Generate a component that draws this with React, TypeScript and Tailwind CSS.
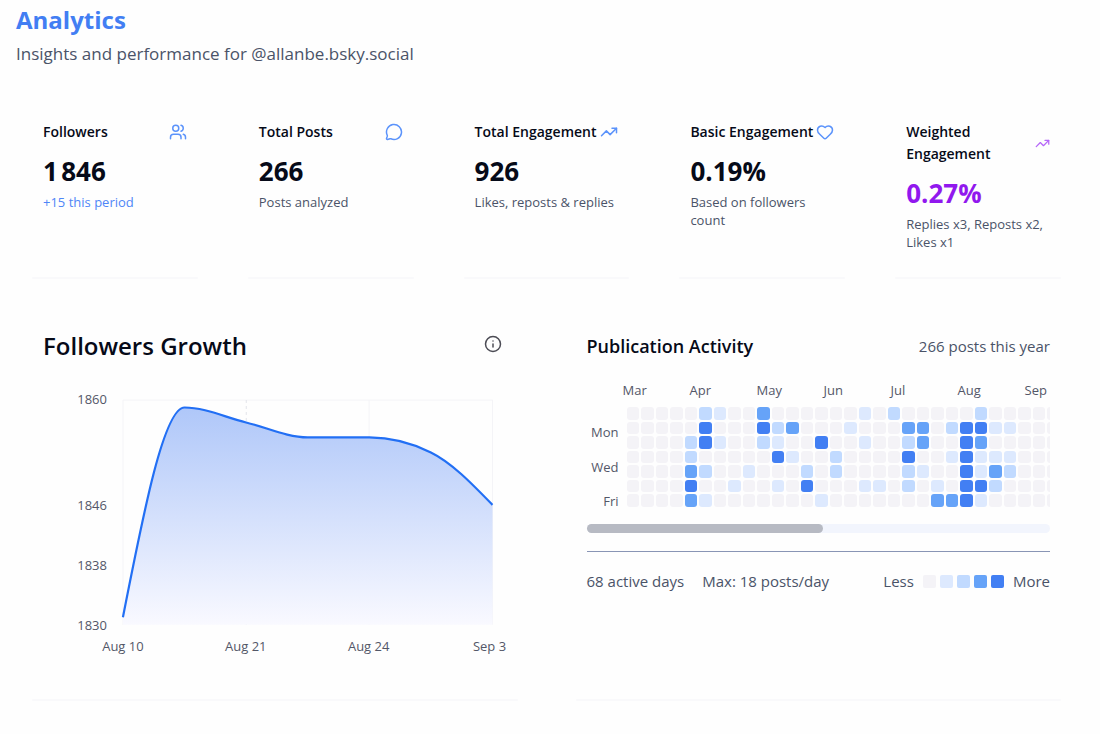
import { Heart, Info, MessageCircle, TrendingUp, Users } from "lucide-react";
import type { ReactNode } from "react";

type Stat = {
  label: string;
  value: string;
  note: string;
  icon: ReactNode;
  valueClass?: string;
  noteClass?: string;
};

const stats: Stat[] = [
  {
    label: "Followers",
    value: "1\u202f846",
    note: "+15 this period",
    icon: <Users className="size-[18px] shrink-0 text-[#5b93fb]" />,
    noteClass: "text-[#4f86f7]",
  },
  {
    label: "Total Posts",
    value: "266",
    note: "Posts analyzed",
    icon: <MessageCircle className="size-[18px] shrink-0 text-[#5b93fb]" />,
  },
  {
    label: "Total Engagement",
    value: "926",
    note: "Likes, reposts & replies",
    icon: <TrendingUp className="size-[18px] shrink-0 text-[#5b93fb]" />,
  },
  {
    label: "Basic Engagement",
    value: "0.19%",
    note: "Based on followers count",
    icon: <Heart className="size-[18px] shrink-0 text-[#5b93fb]" />,
  },
  {
    label: "Weighted Engagement",
    value: "0.27%",
    note: "Replies x3, Reposts x2, Likes x1",
    icon: <TrendingUp className="size-[15px] shrink-0 text-[#b566f8]" />,
    valueClass: "text-[#9118ee]",
  },
];

const months = ["Mar", "Apr", "May", "Jun", "Jul", "Aug", "Sep"];

// One string per weekday, one digit (0-4) per week.
const activity = [
  "000002100300000010200000200000",
  "000004000423000100033024411000",
  "000024100210040010023004300000",
  "000020000041002000040014111000",
  "000032001000202000021004132000",
  "000040010010400011020104420000",
  "000031000000010000000334100000",
];

const levels = [
  "bg-[#f4f3f7]",
  "bg-[#dde9fe]",
  "bg-[#c1daff]",
  "bg-[#66a3f8]",
  "bg-[#427ff3]",
];

const curve =
  "M80,232.5C100.6,127.5 121.1,22.5 141.7,22.5C162.2,22.5 182.8,32.5 203.3,37.5C223.9,42.5 244.4,52.5 265,52.5L326.7,52.5C347.2,52.5 367.8,57.5 388.3,67.5C408.9,77.5 429.4,98.8 450,120";

function Card({ children }: { children: ReactNode }) {
  return (
    <section className="flex min-w-0 flex-col justify-between">
      <div className="px-[27px] pt-[27px] pb-[26px]">{children}</div>
      <div className="mx-4 h-0.5 rounded-full bg-[#f9f9fb]" />
    </section>
  );
}

function StatCard({ stat }: { stat: Stat }) {
  return (
    <Card>
      <div className="flex items-center justify-between">
        <h2 className="text-[14px] leading-[22px] font-semibold">{stat.label}</h2>
        {stat.icon}
      </div>
      <p className={`mt-[11px] text-[26px] leading-[34px] font-bold ${stat.valueClass ?? ""}`}>
        {stat.value}
      </p>
      <p className={`mt-[5px] text-[13px] leading-[18px] ${stat.noteClass ?? "text-[#4a5368]"}`}>
        {stat.note}
      </p>
    </Card>
  );
}

function GrowthChart() {
  return (
    <svg
      viewBox="0 0 464 288"
      className="mt-[23px] w-full overflow-visible"
      role="img"
      aria-label="Followers growth"
    >
      <defs>
        <linearGradient id="growth" x1="0" y1="0" x2="0" y2="1">
          <stop offset="0" stopColor="#afc7f9" />
          <stop offset="1" stopColor="#f9f9ff" />
        </linearGradient>
      </defs>
      <path d="M80,240V15H450V240M326.5,15V240" fill="none" stroke="#f4f4f7" />
      <path d="M203.5,15V240" stroke="#e3e4ea" strokeDasharray="3 3" />
      <path d={`${curve}V240H80Z`} fill="url(#growth)" />
      <path d={curve} fill="none" stroke="#226ff4" strokeWidth="2.2" />
      <g className="fill-[#535768] text-[13px]" textAnchor="end">
        <text x="64" y="19">1860</text>
        <text x="64" y="125">1846</text>
        <text x="64" y="185">1838</text>
        <text x="64" y="245">1830</text>
      </g>
      <g className="fill-[#535768] text-[13px]" textAnchor="middle">
        <text x="80" y="266">Aug 10</text>
        <text x="203" y="266">Aug 21</text>
        <text x="326" y="266">Aug 24</text>
        <text x="447" y="266">Sep 3</text>
      </g>
    </svg>
  );
}

function ActivityGrid() {
  return (
    <div className="mt-[18px] overflow-hidden text-[13px] leading-5 text-[#535768]">
      <div className="ml-9 flex">
        {months.map((month) => (
          <span key={month} className="w-[67px] shrink-0">
            {month}
          </span>
        ))}
      </div>
      <div className="mt-[7px] flex gap-2">
        <div className="flex w-8 shrink-0 flex-col justify-between pt-[15px] text-right">
          <span>Mon</span>
          <span>Wed</span>
          <span>Fri</span>
        </div>
        <div className="min-w-0 flex-1 overflow-hidden pb-1">
          <div className="grid h-[100px] w-[433px] grid-rows-7 gap-0.5">
            {activity.map((row, day) => (
              <div key={day} className="grid grid-cols-[repeat(30,minmax(0,1fr))] gap-0.5">
                {row.split("").map((level, week) => (
                  <span key={week} className={`rounded-[3px] ${levels[Number(level)]}`} />
                ))}
              </div>
            ))}
          </div>
        </div>
      </div>
    </div>
  );
}

export default function App() {
  return (
    <main className="min-h-screen bg-[#fefefe] pr-[23px] pl-4 font-['Open_Sans','Noto_Sans',sans-serif] text-[#060a18]">
      <header>
        <h1 className="pt-1 text-[24px] leading-8 font-bold text-[#427ef3]">Analytics</h1>
        <p className="mt-1 text-[17px] leading-7 text-[#4a5368]">
          Insights and performance for @allanbe.bsky.social
        </p>
      </header>

      <div className="mt-[26px] grid grid-cols-5 gap-[18px]">
        {stats.map((stat) => (
          <StatCard key={stat.label} stat={stat} />
        ))}
      </div>

      <div className="mt-6 grid grid-cols-2 gap-[26px]">
        <Card>
          <div className="flex items-start justify-between pr-[5px]">
            <h2 className="text-[24px] leading-8 font-semibold">Followers Growth</h2>
            <button type="button" aria-label="About followers growth" className="mt-[5px]">
              <Info className="size-[18px] text-[#4c4c55]" />
            </button>
          </div>
          <GrowthChart />
        </Card>
        <Card>
          <div className="flex items-center justify-between">
            <h2 className="text-[18px] leading-8 font-semibold">Publication Activity</h2>
            <span className="text-[15px] text-[#4a5368]">266 posts this year</span>
          </div>
          <ActivityGrid />
          <div className="mt-[13px] h-[9px] rounded-full bg-[#f2f5fd]">
            <div className="h-full w-[51%] rounded-full bg-[#b7bac3]" />
          </div>
          <div className="mt-[18px] flex items-center justify-between border-t border-[#8995b5] pt-[18px] text-[15px] leading-[22px] text-[#4a5368]">
            <div className="flex gap-[18px]">
              <span>68 active days</span>
              <span>Max: 18 posts/day</span>
            </div>
            <div className="flex items-center gap-[9px]">
              <span>Less</span>
              <div className="flex gap-1">
                {levels.map((level) => (
                  <span key={level} className={`size-[13px] rounded-[2px] ${level}`} />
                ))}
              </div>
              <span>More</span>
            </div>
          </div>
        </Card>
      </div>
    </main>
  );
}
